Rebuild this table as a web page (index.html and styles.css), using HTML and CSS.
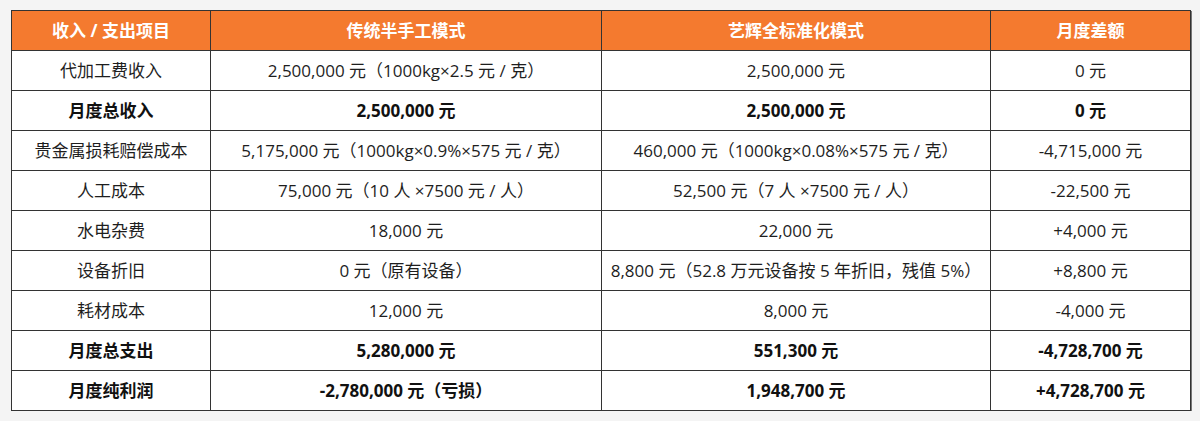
FILE: index.html
```html
<!DOCTYPE html>
<html lang="zh-CN">
<head>
<meta charset="utf-8">
<title>成本对比</title>
<link rel="stylesheet" href="styles.css">
</head>
<body>
<div class="wrap">
<table class="cmp">
  <colgroup>
    <col class="c1"><col class="c2"><col class="c3"><col class="c4">
  </colgroup>
  <thead>
    <tr><th>收入 / 支出项目</th><th>传统半手工模式</th><th>艺辉全标准化模式</th><th>月度差额</th></tr>
  </thead>
  <tbody>
    <tr><td>代加工费收入</td><td>2,500,000 元（1000kg×2.5 元 / 克）</td><td>2,500,000 元</td><td>0 元</td></tr>
    <tr class="b"><td>月度总收入</td><td>2,500,000 元</td><td>2,500,000 元</td><td>0 元</td></tr>
    <tr><td>贵金属损耗赔偿成本</td><td>5,175,000 元（1000kg×0.9%×575 元 / 克）</td><td>460,000 元（1000kg×0.08%×575 元 / 克）</td><td>-4,715,000 元</td></tr>
    <tr><td>人工成本</td><td>75,000 元（10 人 ×7500 元 / 人）</td><td>52,500 元（7 人 ×7500 元 / 人）</td><td>-22,500 元</td></tr>
    <tr><td>水电杂费</td><td>18,000 元</td><td>22,000 元</td><td>+4,000 元</td></tr>
    <tr><td>设备折旧</td><td>0 元（原有设备）</td><td>8,800 元（52.8 万元设备按 5 年折旧，残值 5%）</td><td>+8,800 元</td></tr>
    <tr><td>耗材成本</td><td>12,000 元</td><td>8,000 元</td><td>-4,000 元</td></tr>
    <tr class="b"><td>月度总支出</td><td>5,280,000 元</td><td>551,300 元</td><td>-4,728,700 元</td></tr>
    <tr class="b"><td>月度纯利润</td><td>-2,780,000 元（亏损）</td><td>1,948,700 元</td><td>+4,728,700 元</td></tr>
  </tbody>
</table>
</div>
</body>
</html>
```
FILE: styles.css
```css
html, body {
  margin: 0;
  padding: 0;
  background: #f4f4f4;
}
.wrap {
  padding: 10px 10px 0 11px;
}
.cmp {
  width: 1179px;
  border-collapse: collapse;
  table-layout: fixed;
  background: #ffffff;
  font-family: "Open Sans", "Noto Sans CJK SC", sans-serif;
  font-size: 17px;
  line-height: 22px;
  color: #1e1e1e;
  box-shadow: 1px 1px 0 #777;
}
.c1 { width: 199px; }
.c2 { width: 391px; }
.c3 { width: 389px; }
.c4 { width: 200px; }
.cmp tr {
  height: 40px;
}
.cmp th, .cmp td {
  border: 1px solid #333;
  padding: 0 4px;
  text-align: center;
  white-space: nowrap;
}
.cmp th {
  background: #f47a2f;
  color: #ffffff;
  font-weight: 700;
  font-size: 17px;
}
.cmp tr.b td {
  font-weight: 700;
  color: #111;
}
```
